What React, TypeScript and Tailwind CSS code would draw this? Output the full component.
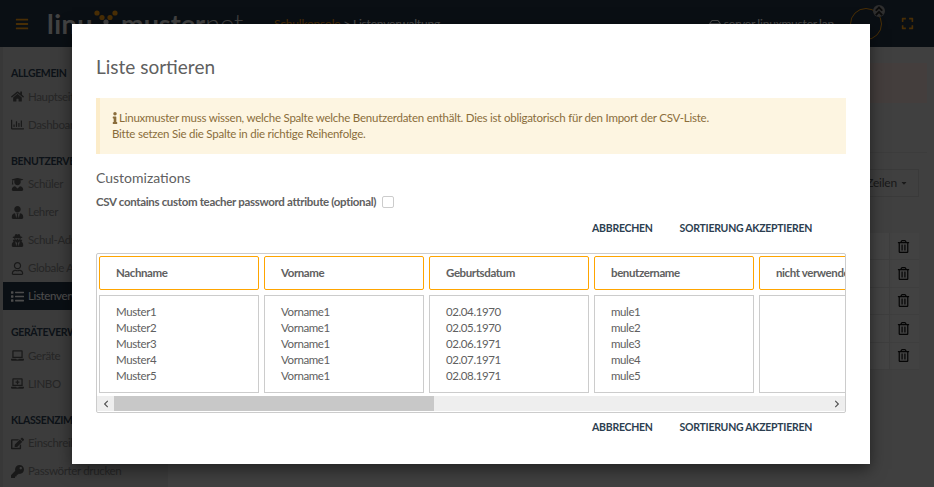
import { FaBars, FaHome, FaRegChartBar, FaUserGraduate, FaRegUser, FaUserTie, FaUserSecret, FaList, FaLaptop, FaLaptopMedical, FaEdit, FaKey, FaRegTrashAlt, FaInfo, FaChevronLeft, FaChevronRight, FaAngleDoubleUp, FaRegHdd, FaExpand, FaCaretDown } from 'react-icons/fa';
import { type ReactNode } from 'react';

const sans = "font-['Lato','Noto_Sans',sans-serif]";

const sections: { title: string; items: { label: string; icon: ReactNode; active?: boolean }[] }[] = [
  { title: 'ALLGEMEIN', items: [{ label: 'Hauptseite', icon: <FaHome /> }, { label: 'Dashboard', icon: <FaRegChartBar /> }] },
  {
    title: 'BENUTZERVERWALTUNG',
    items: [
      { label: 'Schüler', icon: <FaUserGraduate /> },
      { label: 'Lehrer', icon: <FaUserTie /> },
      { label: 'Schul-Admins', icon: <FaUserSecret /> },
      { label: 'Globale Admins', icon: <FaRegUser /> },
      { label: 'Listenverwaltung', icon: <FaList />, active: true },
    ],
  },
  { title: 'GERÄTEVERWALTUNG', items: [{ label: 'Geräte', icon: <FaLaptop /> }, { label: 'LINBO', icon: <FaLaptopMedical /> }] },
  { title: 'KLASSENZIMMER', items: [{ label: 'Einschreiben', icon: <FaEdit /> }, { label: 'Passwörter drucken', icon: <FaKey /> }] },
];

const columns = [
  { name: 'Nachname', rows: ['Muster1', 'Muster2', 'Muster3', 'Muster4', 'Muster5'] },
  { name: 'Vorname', rows: ['Vorname1', 'Vorname1', 'Vorname1', 'Vorname1', 'Vorname1'] },
  { name: 'Geburtsdatum', rows: ['02.04.1970', '02.05.1970', '02.06.1971', '02.07.1971', '02.08.1971'] },
  { name: 'benutzername', rows: ['mule1', 'mule2', 'mule3', 'mule4', 'mule5'] },
  { name: 'nicht verwenden', rows: [] },
];

const Actions = () => (
  <div className="flex justify-end gap-[27px] pr-[34px] text-[10.5px] font-bold leading-4 tracking-[-0.27px] text-[#2c3e50]">
    <span>ABBRECHEN</span>
    <span>SORTIERUNG AKZEPTIEREN</span>
  </div>
);

const Background = () => (
  <div className="flex h-full flex-col bg-[#d6d6d6]">
    <header className="flex h-[47px] shrink-0 items-center bg-[#243244] text-white">
      <FaBars className="ml-[15px] h-[14px] w-[14px] shrink-0 text-[#f39c12]" />
      <div className="ml-[18px] flex w-[227px] shrink-0 items-center text-[27px] leading-none text-[#ddd]">
        <span className="font-bold tracking-[0.5px]">linu</span>
        <svg viewBox="0 0 26 18" className="-mt-[11px] mr-[2px] h-[18px] w-[26px]">
          <circle cx="4" cy="4" r="2.6" fill="#f39c12" />
          <circle cx="22" cy="4" r="2.6" fill="#f39c12" />
          <circle cx="9" cy="8.5" r="2.6" fill="#f39c12" />
          <circle cx="17" cy="8.5" r="2.6" fill="#f39c12" />
          <circle cx="13" cy="13" r="2.6" fill="#ddd" />
        </svg>
        <span className="font-bold">muster</span>
        <span className="font-light">net</span>
      </div>
      <span className="whitespace-nowrap text-[12px] tracking-[-0.2px]"><span className="text-[#f39c12]">Schulkonsole</span> &gt; Listenverwaltung</span>
      <span className="ml-auto flex items-center gap-[3px] whitespace-nowrap text-[12px] tracking-[-0.2px]"><FaRegHdd className="h-3 w-3" />server.linuxmuster.lan</span>
      <div className="relative ml-[16px] h-8 w-8 shrink-0 rounded-full border border-[#f39c12]">
        <FaAngleDoubleUp className="absolute -right-1 -top-1 h-3 w-3 rounded-full bg-[#999] text-[#222]" />
      </div>
      <FaExpand className="ml-[19px] mr-5 h-[13px] w-[13px] shrink-0 text-[#f39c12]" />
    </header>
    <div className="flex min-h-0 flex-1">
      <div className="w-[3px] shrink-0 bg-[#bbb]" />
      <aside className="w-[165px] shrink-0 overflow-hidden bg-[#c8c8c8] pt-[4px] text-[11.5px] tracking-[-0.35px] text-[#808080]">
        {sections.map((s) => (
          <div key={s.title} className="pt-[16px]">
            <div className="whitespace-nowrap pl-2 text-[10.5px] font-bold leading-[12px] tracking-[-0.35px] text-[#2c3e50]">{s.title}</div>
            <div className="pt-[3.5px]">
              {s.items.map((it) => (
                <div key={it.label} className={`flex h-[28px] items-center gap-[4px] pl-2 ${it.active ? 'bg-[#243244] text-white' : ''}`}>
                  <span className={`flex w-[13px] justify-center text-[13px] ${it.active ? 'text-white' : 'text-[#555]'}`}>{it.icon}</span>
                  <span className="whitespace-nowrap">{it.label}</span>
                </div>
              ))}
            </div>
          </div>
        ))}
      </aside>
      <main className="flex min-w-0 flex-1 flex-col pl-[22px] pr-[7px] pt-[16px]">
        <div className="h-10 shrink-0 bg-[#e4d0cb]" />
        <div className="mt-[49px] shrink-0 border-t border-[#c8c8c8]" />
        <div className="mr-2 mt-4 flex shrink-0 justify-end">
          <div className="flex h-7 items-center gap-[3px] border border-[#c4c4c4] px-[10px] text-[12px] tracking-[-0.2px] text-[#555]">10 Zeilen <FaCaretDown className="h-2 w-2" /></div>
        </div>
        <div className="mr-2 mt-[36px] flex flex-col">
          {[0, 1, 2, 3, 4].map((i) => (
            <div key={i} className="flex h-[27.4px] justify-end border-b border-[#cfcfcf] bg-[#e4e4e4]">
              <div className="flex w-[30px] items-center justify-center border-l border-[#cfcfcf] bg-[#dcdcdc] pr-[2px] text-[#111]"><FaRegTrashAlt className="h-[13px] w-[13px]" /></div>
            </div>
          ))}
        </div>
      </main>
    </div>
  </div>
);

export default function App() {
  return (
    <div className={`relative h-[487px] w-[934px] overflow-hidden ${sans}`}>
      <Background />
      <div className="absolute inset-0 bg-black/70" />
      <div className="absolute left-[72px] top-[24px] h-[440px] w-[798px] bg-white px-6 pt-[31px] text-[#606060] shadow-[0_5px_15px_rgba(0,0,0,0.5)]">
        <h2 className="text-[19px] leading-[24px] text-[#606060]">Liste sortieren</h2>
        <div className="mt-[19px] h-[56px] border-l-4 border-[#fcecc9] bg-[#fdf5e1] py-[12px] pl-3 text-[11.5px] leading-4 tracking-[-0.23px] text-[#8a6d3b]">
          <div className="flex items-center gap-[1px]"><FaInfo className="h-3 w-[6px]" />Linuxmuster muss wissen, welche Spalte welche Benutzerdaten enthält. Dies ist obligatorisch für den Import der CSV-Liste.</div>
          <div>Bitte setzen Sie die Spalte in die richtige Reihenfolge.</div>
        </div>
        <div className="mt-[15px] text-[14px] leading-[18px]">Customizations</div>
        <div className="mt-[8px] flex h-[14px] items-center gap-[6px] text-[11.5px] font-bold tracking-[-0.33px]">
          <span>CSV contains custom teacher password attribute (optional)</span>
          <span className="h-3 w-3 rounded-[2px] border border-[#ccc]" />
        </div>
        <div className="mt-[11px]"><Actions /></div>
        <div className="mt-[17px] h-[160px] overflow-hidden rounded-[2px] border border-[#ccc]">
          <div className="flex gap-[5px] overflow-hidden pl-[2px] pt-[2px] text-[11.5px] leading-4 tracking-[-0.4px]">
            {columns.map((c) => (
              <div key={c.name} className="w-[160px] shrink-0">
                <div className="flex h-[34px] items-center rounded-[2px] border border-[#ffa500] pl-[16px] font-bold whitespace-nowrap">{c.name}</div>
                <div className="mt-[5px] h-[98px] border border-[#ccc] pl-[16px] pt-[8px]">
                  {c.rows.map((r, i) => <div key={i}>{r}</div>)}
                </div>
              </div>
            ))}
          </div>
          <div className="mt-[3px] flex h-[15px] bg-[#eee] text-[#555]">
            <span className="flex w-[17px] items-center justify-center"><FaChevronLeft className="h-2 w-2" /></span>
            <span className="w-[320px] bg-[#c8c8c8]" />
            <span className="ml-auto flex w-[17px] items-center justify-center"><FaChevronRight className="h-2 w-2" /></span>
          </div>
        </div>
        <div className="mt-[6px]"><Actions /></div>
      </div>
    </div>
  );
}
